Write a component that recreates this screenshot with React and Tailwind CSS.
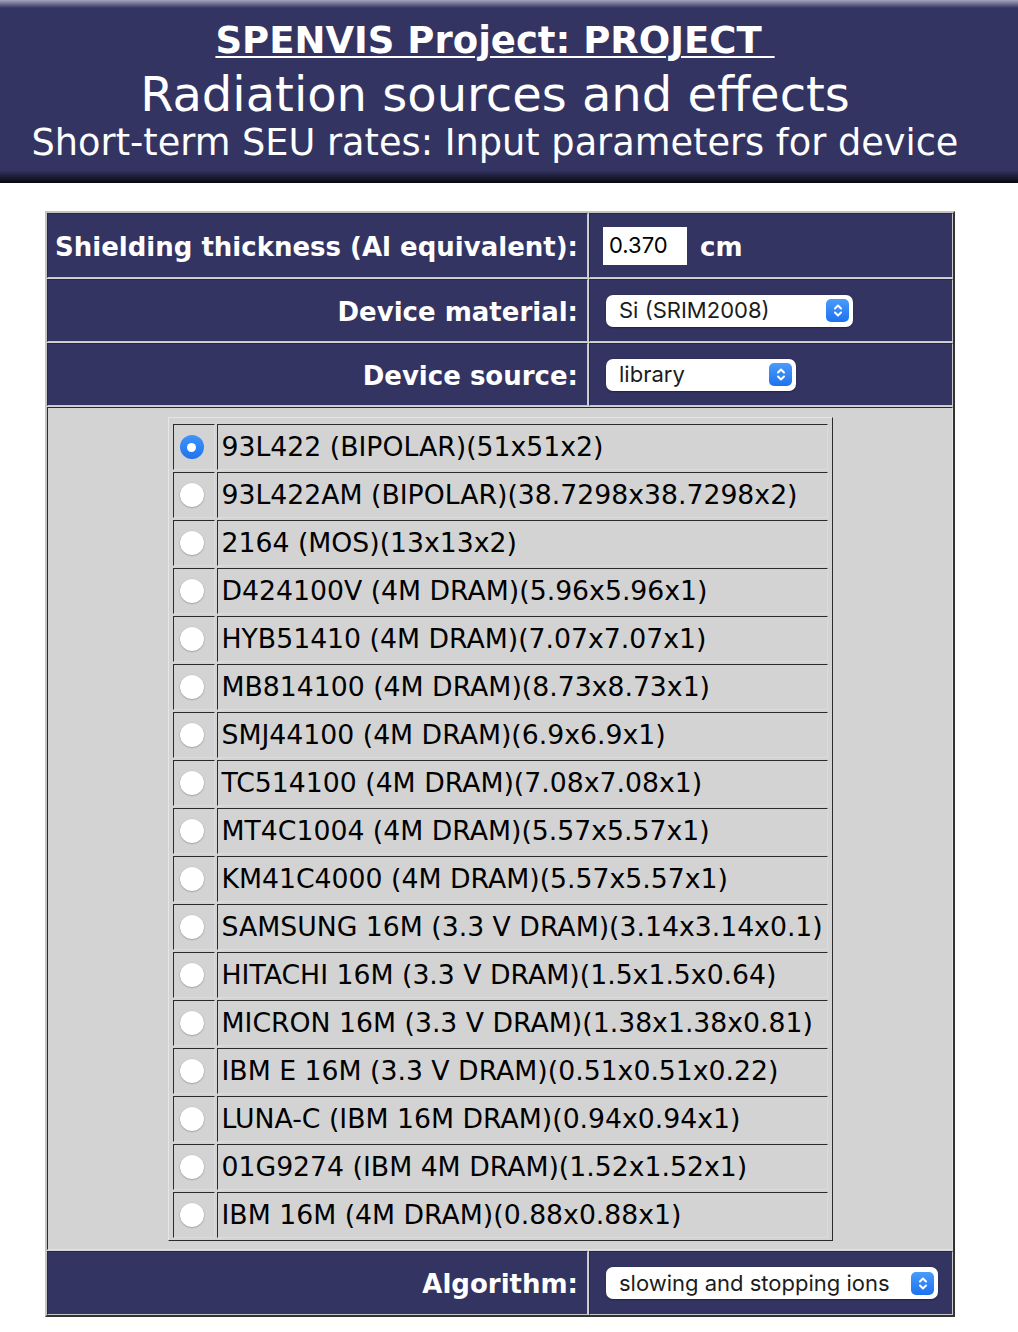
const devices = [
  '93L422 (BIPOLAR)(51x51x2)',
  '93L422AM (BIPOLAR)(38.7298x38.7298x2)',
  '2164 (MOS)(13x13x2)',
  'D424100V (4M DRAM)(5.96x5.96x1)',
  'HYB51410 (4M DRAM)(7.07x7.07x1)',
  'MB814100 (4M DRAM)(8.73x8.73x1)',
  'SMJ44100 (4M DRAM)(6.9x6.9x1)',
  'TC514100 (4M DRAM)(7.08x7.08x1)',
  'MT4C1004 (4M DRAM)(5.57x5.57x1)',
  'KM41C4000 (4M DRAM)(5.57x5.57x1)',
  'SAMSUNG 16M (3.3 V DRAM)(3.14x3.14x0.1)',
  'HITACHI 16M (3.3 V DRAM)(1.5x1.5x0.64)',
  'MICRON 16M (3.3 V DRAM)(1.38x1.38x0.81)',
  'IBM E 16M (3.3 V DRAM)(0.51x0.51x0.22)',
  'LUNA-C (IBM 16M DRAM)(0.94x0.94x1)',
  '01G9274 (IBM 4M DRAM)(1.52x1.52x1)',
  'IBM 16M (4M DRAM)(0.88x0.88x1)',
];

const navyCell =
  'bg-[#343463] border border-t-[#2b2b2b] border-l-[#2b2b2b] border-b-[#c9c9c9] border-r-[#c9c9c9]';
const labelCell =
  'w-[541px] flex items-center justify-end pr-[9px] pt-[3px] text-white font-bold text-[26px] whitespace-nowrap ' + navyCell;
const valueCell = 'w-[364px] flex items-center ' + navyCell;

function Chevrons() {
  return (
    <svg width="10" height="15" viewBox="0 0 10 15" fill="none" stroke="white" strokeWidth="2" strokeLinecap="round" strokeLinejoin="round">
      <path d="M2 5.5 5 2.5 8 5.5" />
      <path d="M2 9.5 5 12.5 8 9.5" />
    </svg>
  );
}

// mac-style popup select
const SelectBox = ({ value, className = '' }) => (
  <div
    className={`h-[32px] flex items-center justify-between pl-[13px] pr-[4px] bg-white rounded-[7px] shadow-[0_0.5px_1.5px_rgba(0,0,0,0.35)] text-[22px] text-[#1c1c1c] ${className}`}
    style={{ fontFamily: 'Inter, "Noto Sans", sans-serif' }}
  >
    <span className="whitespace-nowrap">{value}</span>
    <span className="w-[23px] h-[23px] rounded-[5px] bg-gradient-to-b from-[#4a9bfb] to-[#1d72ee] flex items-center justify-center">
      <Chevrons />
    </span>
  </div>
);

const Radio = ({ checked }) =>
  checked ? (
    <span className="w-[24px] h-[24px] rounded-full bg-gradient-to-b from-[#3f93fb] to-[#1f74ee] flex items-center justify-center">
      <span className="w-[9px] h-[9px] rounded-full bg-white" />
    </span>
  ) : (
    <span className="w-[24px] h-[24px] rounded-full bg-white shadow-[0_0.5px_1.5px_rgba(0,0,0,0.4)]" />
  );

export default function App() {
  return (
    <div className="w-[1018px] min-h-[1332px] bg-white" style={{ fontFamily: '"DejaVu Sans", Verdana, sans-serif' }}>
      {/* page header */}
      <div className="h-[183px] bg-[linear-gradient(to_bottom,#a4a4bc_0px,#343463_8px,#343463_170px,#08080f_183px)] text-white">
        <div className="w-[990px] flex flex-col items-center">
          <div className="pt-[20px] text-[37px] leading-[42px] font-bold underline decoration-[2px] underline-offset-[3px] whitespace-pre">
            {'SPENVIS Project: PROJECT '}
          </div>
          <div className="mt-[6px] text-[48px] leading-[52px] whitespace-nowrap">Radiation sources and effects</div>
          <div className="mt-[2px] text-[36.7px] leading-[42px] whitespace-nowrap">
            Short-term SEU rates: Input parameters for device
          </div>
        </div>
      </div>

      {/* parameter table */}
      <div className="ml-[45px] mt-[28px] w-[910px] border-2 border-t-[#c4c4c4] border-l-[#c4c4c4] border-b-[#333333] border-r-[#333333] bg-[#d3d3d3] flex flex-col gap-[1px]">
        <div className="flex gap-[1px]">
          <div className={`h-[65px] ${labelCell}`}>Shielding thickness (Al equivalent):</div>
          <div className={`h-[65px] pl-[13px] ${valueCell}`}>
            <div
              className="w-[84px] h-[38px] bg-white flex items-center pl-[6px] text-[22px] text-black"
              style={{ fontFamily: 'Inter, "Noto Sans", sans-serif' }}
            >
              0.370
            </div>
            <span className="ml-[13px] pt-[3px] text-white font-bold text-[26px]">cm</span>
          </div>
        </div>

        <div className="flex gap-[1px]">
          <div className={`h-[63px] ${labelCell}`}>Device material:</div>
          <div className={`h-[63px] pl-[16px] ${valueCell}`}>
            <SelectBox value="Si (SRIM2008)" className="w-[247px]" />
          </div>
        </div>

        <div className="flex gap-[1px]">
          <div className={`h-[63px] ${labelCell}`}>Device source:</div>
          <div className={`h-[63px] pl-[16px] ${valueCell}`}>
            <SelectBox value="library" className="w-[190px]" />
          </div>
        </div>

        {/* device library list */}
        <div className="h-[843px] flex justify-center items-start pt-[9px] bg-[#d3d3d3] border border-t-[#2b2b2b] border-l-[#2b2b2b] border-b-[#e2e2e2] border-r-[#e2e2e2]">
          <div className="w-[665px] border border-t-[#e6e6e6] border-l-[#e6e6e6] border-b-[#2b2b2b] border-r-[#2b2b2b] pt-[6px] pb-[2px] px-[4px] flex flex-col gap-[2px]">
            {devices.map((name, i) => (
              <div key={name} className="flex gap-[2px]">
                <div className="w-[42px] h-[46px] flex items-center pl-[6px] border border-t-[#2b2b2b] border-l-[#2b2b2b] border-b-[#dcdcdc] border-r-[#dcdcdc]">
                  <Radio checked={i === 0} />
                </div>
                <div className="w-[611px] h-[46px] flex items-center pl-[4px] text-[26.7px] text-black whitespace-nowrap border border-t-[#2b2b2b] border-l-[#2b2b2b] border-b-[#dcdcdc] border-r-[#dcdcdc]">
                  {name}
                </div>
              </div>
            ))}
          </div>
        </div>

        <div className="flex gap-[1px]">
          <div className={`h-[64px] ${labelCell}`}>Algorithm:</div>
          <div className={`h-[64px] pl-[16px] ${valueCell}`}>
            <SelectBox value="slowing and stopping ions" className="w-[332px]" />
          </div>
        </div>
      </div>
    </div>
  );
}
